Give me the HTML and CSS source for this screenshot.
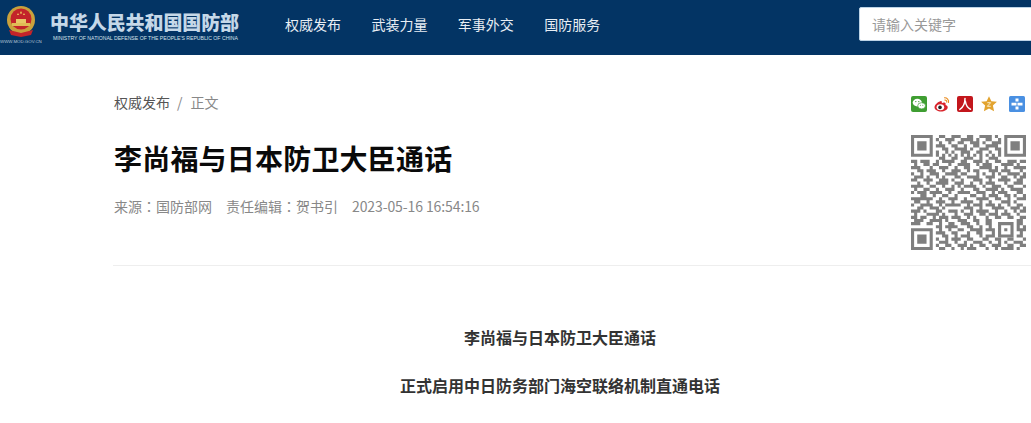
FILE: index.html
```html
<!DOCTYPE html>
<html lang="zh-CN">

<head>
    <meta charset="UTF-8">
    <meta name="viewport" content="width=device-width, initial-scale=1.0">
    <title>李尚福与日本防卫大臣通话</title>
    <link rel="stylesheet" href="styles.css">
</head>

<body>
    <header class="top">
        <div class="logo">
            <div class="emblem">
                <svg width="30" height="34" viewBox="0 0 30 34">
                    <circle cx="15" cy="15" r="14" fill="#c9a13c" />
                    <circle cx="15" cy="14" r="10.5" fill="#c3242a" />
                    <path d="M6 18h18v3H6z" fill="#e0bb55" />
                    <path d="M10 18v-4h10v4z" fill="#e8c765" />
                    <path d="M12 8l1 2-2 0zM15 6l1.2 2.6h-2.4zM18 8l1 2-2 0z" fill="#f0d060" />
                    <path d="M3 25l12 3 12-3-2 5-10 2-10-2z" fill="#c3242a" />
                </svg>
                <span class="site-url">WWW.MOD.GOV.CN</span>
            </div>
            <div class="logo-text">
                <strong class="logo-cn">中华人民共和国国防部</strong>
                <span class="logo-en">MINISTRY OF NATIONAL DEFENSE OF THE PEOPLE'S REPUBLIC OF CHINA</span>
            </div>
        </div>
        <nav class="nav">
            <a>权威发布</a>
            <a>武装力量</a>
            <a>军事外交</a>
            <a>国防服务</a>
        </nav>
        <div class="search">请输入关键字</div>
    </header>

    <main class="page">
        <div class="head">
            <div class="head-left">
                <div class="crumb"><a>权威发布</a><span class="sep">/</span><span class="now">正文</span></div>
                <h1 class="title">李尚福与日本防卫大臣通话</h1>
                <div class="meta">
                    <span>来源<span class="colon" lang="zh-TW">：</span>国防部网</span>
                    <span>责任编辑<span class="colon" lang="zh-TW">：</span>贺书引</span>
                    <span class="date">2023-05-16 16:54:16</span>
                </div>
            </div>
            <div class="head-right">
                <div class="share">
                    <svg class="ico" viewBox="0 0 16 16">
                        <rect width="16" height="16" rx="2" fill="#3f9e32" />
                        <ellipse cx="6.3" cy="6.6" rx="4.6" ry="3.8" fill="#fff" />
                        <ellipse cx="10.6" cy="9.8" rx="3.9" ry="3.1" fill="#fff" stroke="#3f9e32" stroke-width=".7" />
                        <circle cx="4.8" cy="5.6" r=".7" fill="#3f9e32" />
                        <circle cx="7.8" cy="5.6" r=".7" fill="#3f9e32" />
                        <circle cx="9.4" cy="9.2" r=".5" fill="#3f9e32" />
                        <circle cx="11.8" cy="9.2" r=".5" fill="#3f9e32" />
                    </svg>
                    <svg class="ico" viewBox="0 0 16 16">
                        <path d="M7 5C3.500 6 .5 9 .5 11.300.5 14 3.800 15.500 7 15.500c3.500 0 6.700-1.800 6.700-4.300 0-1.500-1.300-2-2.200-2.300.4-1.200.1-2.300-1.400-2.300-.8 0-1.700.3-2.300.6.3-1.500-.1-2.200-.8-2.200z" fill="#d9232b" />
                        <ellipse cx="6.400" cy="11.200" rx="3.800" ry="3" fill="#fff" />
                        <circle cx="6" cy="11.400" r="1.800" fill="#222" />
                        <path d="M10.500 1.800c2.500-.2 4.500 2 4 4.700M10.800 4c1.300-.1 2.200 1 2 2.200" fill="none" stroke="#e98a1c" stroke-width="1.100" stroke-linecap="round" />
                    </svg>
                    <svg class="ico" viewBox="0 0 16 16">
                        <rect width="16" height="16" rx="2" fill="#c3161c" />
                        <path d="M8 2.500C8 7 6.500 11 2.800 13.500M8.300 5c.6 4 2.400 7 5.200 8.300" fill="none" stroke="#fff" stroke-width="1.500" stroke-linecap="round" />
                    </svg>
                    <svg class="ico ico-star" viewBox="0 0 16 16">
                        <path d="M8 .2l2.400 5 5.500.6-4 3.700 1.200 5.700L8 12.400 2.900 15.200l1.200-5.700-4-3.700 5.500-.6z" fill="#e2a32f" />
                        <path d="M6.300 6.700h3.400L6.300 10.300h3.400" fill="none" stroke="#fbeecb" stroke-width="1" />
                    </svg>
                    <svg class="ico ico-last" viewBox="0 0 16 16">
                        <rect width="16" height="16" rx="1.500" fill="#4a90e2" />
                        <path d="M6.500 2.500h3v3h-3zM2.500 6.800h5v2.600h-5zM8.500 6.800h5v2.600h-5zM6.500 10.500h3v3h-3z" fill="#fff" />
                    </svg>
                </div>
                <svg class="qr" width="115" height="115" viewBox="0 0 37 37">
                    <path fill="#7f7f7f" fill-rule="evenodd" d="M0 0h7v7H0zM1 1v5h5V1zM2 2h3v3H2zM30 0h7v7h-7zM31 1v5h5V1zM32 2h3v3h-3zM0 30h7v7H0zM1 31v5h5v-5zM2 32h3v3H2zM28 28h5v5h-5zM29 29v3h3v-3zM30 30h1v1h-1z" />
                    <path fill="none" stroke="#7f7f7f" stroke-width="1" d="M9 .5h2M13 .5h3M18 .5h2M22 .5h4M27 .5h1M8 1.500h1M11 1.500h3M16 1.500h4M21 1.500h1M24 1.500h2M28 1.500h1M9 2.500h1M12 2.500h1M15 2.500h2M19 2.500h3M23 2.500h1M26 2.500h3M8 3.500h3M13 3.500h2M17 3.500h1M20 3.500h2M24 3.500h4M10 4.500h2M14 4.500h4M19 4.500h1M22 4.500h3M27 4.500h2M8 5.500h1M11 5.500h1M13 5.500h1M16 5.500h3M21 5.500h2M25 5.500h1M28 5.500h1M8 6.500h1M10 6.500h1M12 6.500h1M14 6.500h1M16 6.500h1M18 6.500h1M20 6.500h1M22 6.500h1M24 6.500h1M26 6.500h1M28 6.500h1M9 7.500h2M13 7.500h2M17 7.500h3M22 7.500h1M25 7.500h3M0 8.500h2M3 8.500h3M8 8.500h1M10 8.500h4M16 8.500h2M20 8.500h3M24 8.500h1M27 8.500h2M31 8.500h3M35 8.500h2M1 9.500h1M4 9.500h2M7 9.500h2M12 9.500h1M15 9.500h4M21 9.500h1M23 9.500h3M29 9.500h4M34 9.500h1M0 10.500h3M6 10.500h1M9 10.500h3M14 10.500h1M17 10.500h2M22 10.500h4M27 10.500h1M30 10.500h1M33 10.500h4M2 11.500h2M5 11.500h3M10 11.500h1M13 11.500h3M18 11.500h1M20 11.500h2M25 11.500h3M29 11.500h3M35 11.500h1M0 12.500h1M3 12.500h1M6 12.500h3M11 12.500h4M16 12.500h2M21 12.500h1M23 12.500h1M26 12.500h1M28 12.500h1M31 12.500h4M36 12.500h1M1 13.500h3M5 13.500h1M8 13.500h1M10 13.500h1M14 13.500h2M18 13.500h4M24 13.500h3M29 13.500h2M33 13.500h1M35 13.500h2M0 14.500h2M4 14.500h3M9 14.500h3M13 14.500h1M16 14.500h1M20 14.500h3M25 14.500h1M28 14.500h4M34 14.500h2M2 15.500h1M5 15.500h1M8 15.500h4M14 15.500h3M19 15.500h1M22 15.500h1M24 15.500h3M30 15.500h1M33 15.500h3M0 16.500h4M6 16.500h2M10 16.500h1M13 16.500h1M15 16.500h1M17 16.500h4M23 16.500h1M26 16.500h3M31 16.500h2M36 16.500h1M1 17.500h1M4 17.500h2M8 17.500h1M11 17.500h3M16 17.500h1M20 17.500h2M24 17.500h4M29 17.500h1M32 17.500h4M0 18.500h1M2 18.500h3M6 18.500h4M12 18.500h1M15 18.500h4M21 18.500h3M26 18.500h1M28 18.500h3M34 18.500h2M3 19.500h2M7 19.500h1M10 19.500h2M14 19.500h1M19 19.500h2M23 19.500h1M25 19.500h3M30 19.500h2M33 19.500h1M36 19.500h1M0 20.500h7M9 20.500h1M12 20.500h3M17 20.500h1M21 20.500h4M27 20.500h2M31 20.500h1M34 20.500h3M1 21.500h2M5 21.500h1M8 21.500h3M13 21.500h1M16 21.500h4M22 21.500h1M25 21.500h1M29 21.500h3M33 21.500h1M0 22.500h1M3 22.500h4M9 22.500h1M11 22.500h5M18 22.500h1M20 22.500h3M24 22.500h3M28 22.500h1M31 22.500h1M34 22.500h2M2 23.500h2M6 23.500h3M10 23.500h1M17 23.500h3M22 23.500h1M26 23.500h4M32 23.500h3M36 23.500h1M0 24.500h3M4 24.500h1M8 24.500h2M12 24.500h3M16 24.500h1M19 24.500h1M21 24.500h4M27 24.500h1M30 24.500h1M33 24.500h1M35 24.500h2M1 25.500h1M5 25.500h4M10 25.500h1M14 25.500h1M17 25.500h3M22 25.500h2M25 25.500h3M29 25.500h3M34 25.500h1M0 26.500h2M3 26.500h2M7 26.500h1M9 26.500h3M13 26.500h3M18 26.500h1M20 26.500h1M24 26.500h1M27 26.500h2M31 26.500h2M35 26.500h2M1 27.500h3M6 27.500h4M11 27.500h1M15 27.500h3M20 27.500h2M24 27.500h2M34 27.500h2M0 28.500h3M5 28.500h2M9 28.500h1M12 28.500h2M16 28.500h3M21 28.500h1M24 28.500h2M34 28.500h2M8 29.500h2M11 29.500h4M18 29.500h2M22 29.500h1M25 29.500h1M34 29.500h1M36 29.500h1M9 30.500h1M12 30.500h1M15 30.500h2M19 30.500h4M24 30.500h3M34 30.500h3M8 31.500h3M13 31.500h2M18 31.500h1M21 31.500h2M26 31.500h1M35 31.500h1M10 32.500h2M14 32.500h1M16 32.500h3M22 32.500h1M24 32.500h3M34 32.500h2M8 33.500h1M11 33.500h1M13 33.500h3M18 33.500h2M23 33.500h2M27 33.500h2M31 33.500h2M36 33.500h1M9 34.500h3M14 34.500h1M17 34.500h1M20 34.500h3M25 34.500h1M28 34.500h1M30 34.500h1M33 34.500h3M8 35.500h1M11 35.500h2M15 35.500h3M19 35.500h1M22 35.500h2M26 35.500h3M31 35.500h2M35 35.500h2M9 36.500h2M13 36.500h1M16 36.500h1M18 36.500h3M24 36.500h1M27 36.500h1M29 36.500h4M34 36.500h1" />
                </svg>
            </div>
        </div>

        <div class="body-text">
            <p>李尚福与日本防卫大臣通话</p>
            <p>正式启用中日防务部门海空联络机制直通电话</p>
        </div>
    </main>
</body>

</html>
```

FILE: styles.css
```css
* {
    margin: 0;
    padding: 0;
    box-sizing: border-box;
    font-family: "Noto Sans CJK SC", "Liberation Sans", sans-serif;
}

html,
body {
    height: 423px;
    overflow: hidden;
    background-color: white;
}

.top {
    display: flex;
    align-items: center;
    height: 55px;
    width: 1031px;
    background-color: #033464;
    overflow: hidden;
}

.logo {
    display: flex;
    width: 285px;
    height: 55px;
    flex-shrink: 0;
}

.emblem {
    width: 50px;
    padding: 5px 0 0 6px;
    flex-shrink: 0;
}

.emblem svg {
    display: block;
}

.site-url {
    display: block;
    margin: 0 0 0 -6px;
    width: 50px;
    font-size: 4.4px;
    line-height: 6px;
    color: #b9c8d8;
    font-family: "Liberation Sans", sans-serif;
    white-space: nowrap;
}

.logo-text {
    padding-top: 10px;
}

.logo-cn {
    display: block;
    font-size: 19px;
    line-height: 24px;
    font-weight: 900;
    letter-spacing: -0.1px;
    color: #c5d8e8;
    white-space: nowrap;
}

.logo-en {
    display: block;
    margin: 1px 0 0 3px;
    font-family: "Liberation Sans", sans-serif;
    font-size: 5.15px;
    line-height: 6px;
    color: #d6e1ea;
    white-space: nowrap;
}

.nav {
    display: flex;
    gap: 30.4px;
    width: 574px;
    margin-top: -7px;
    flex-shrink: 0;
}

.nav a {
    font-size: 14px;
    line-height: 20px;
    color: #e8eef4;
}

.search {
    width: 180px;
    height: 34px;
    margin-top: -7px;
    padding-left: 12px;
    flex-shrink: 0;
    background-color: white;
    border: 1px solid #bcd3e6;
    border-radius: 2px;
    font-size: 14px;
    line-height: 32px;
    color: #999;
}

.page {
    margin-left: 113px;
}

.head {
    display: flex;
    height: 211px;
    padding-top: 39px;
    border-bottom: 1px solid #eee;
}

.head-left {
    width: 798px;
    padding-left: 1px;
    flex-shrink: 0;
}

.crumb {
    font-size: 14px;
    line-height: 16px;
    color: #888;
}

.crumb a {
    color: #555;
}

.sep {
    margin: 0 8px 0 7px;
}

.title {
    margin-top: 28px;
    font-size: 28px;
    line-height: 40px;
    font-weight: bold;
    letter-spacing: 0.2px;
    color: #0a0a0a;
}

.meta {
    display: flex;
    gap: 14px;
    margin-top: 18px;
    font-size: 14px;
    line-height: 20px;
    color: #888;
}

.colon {
    font-family: "Noto Sans CJK TC", sans-serif;
}

.date {
    letter-spacing: -0.1px;
}

.head-right {
    flex-shrink: 0;
    padding-top: 2px;
}

.share {
    display: flex;
    height: 16px;
    margin-bottom: 23px;
}

.ico {
    width: 16px;
    height: 16px;
    margin-right: 7px;
    flex-shrink: 0;
}

.ico-star {
    margin-left: 1px;
}

.ico-last {
    margin-left: 5px;
    margin-right: 0;
}

.qr {
    display: block;
}

.body-text {
    width: 894px;
    padding-top: 57px;
    text-align: center;
}

.body-text p {
    margin-bottom: 20px;
    font-size: 16px;
    line-height: 28px;
    font-weight: bold;
    color: #333;
}
```
